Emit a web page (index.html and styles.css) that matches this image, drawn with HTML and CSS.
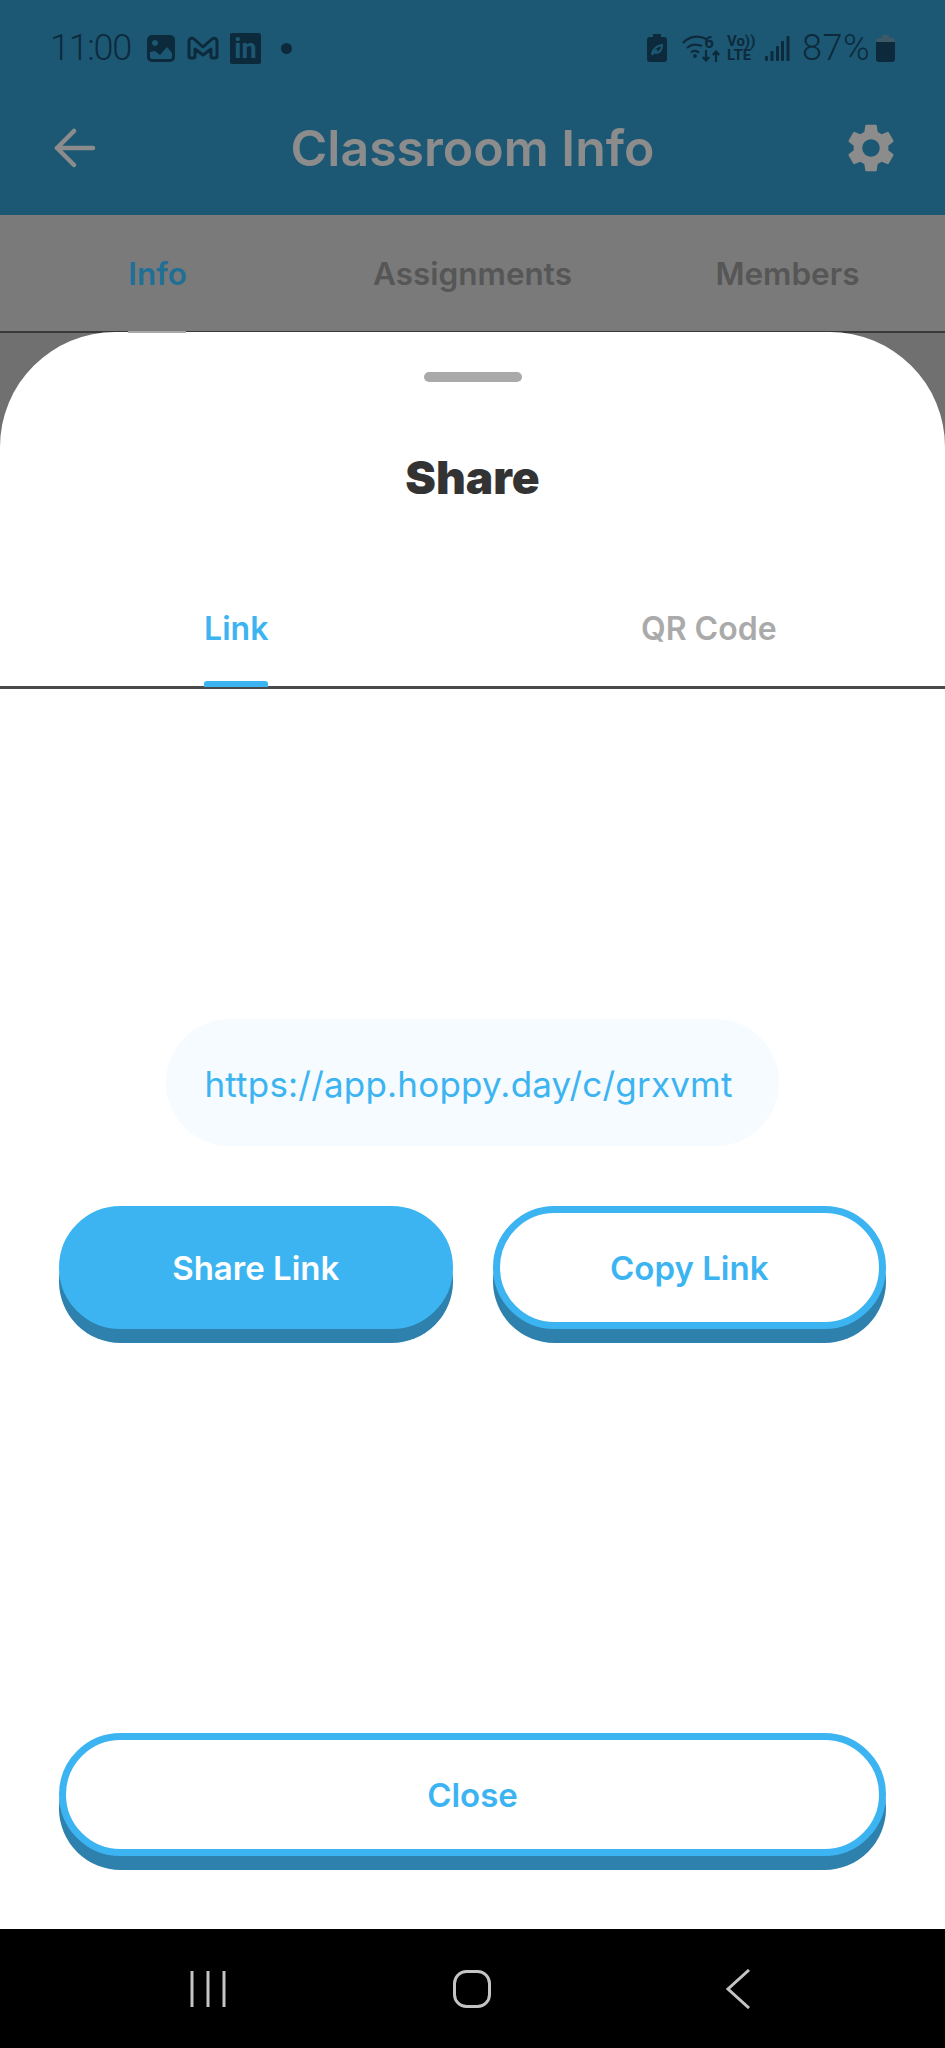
FILE: index.html
```html
<!DOCTYPE html>
<html lang="en">
<head>
  <meta charset="UTF-8">
  <title>Classroom Info</title>
  <meta name="viewport" content="width=device-width, initial-scale=1.0">
  <link rel="stylesheet" href="styles.css">
</head>
<body>
  <div class="tela">
    <div class="status">
      <div class="status-lado">
        <span class="hora">11:00</span>
        <svg class="ic-foto" width="28" height="27" viewBox="0 0 28 27">
          <path fill="#0d2a3d" fill-rule="evenodd" d="M5 0h18a5 5 0 0 1 5 5v17a5 5 0 0 1-5 5H5a5 5 0 0 1-5-5V5a5 5 0 0 1 5-5zM3 17v5a2 2 0 0 0 2 2h18a2 2 0 0 0 2-2v-4l-5-6-7 8-5-4zM8 5a3 3 0 1 0 .01 0z"/>
        </svg>
        <svg class="ic-gmail" width="32" height="24" viewBox="0 0 32 24">
          <path fill="none" stroke="#0d2a3d" stroke-width="3" stroke-linejoin="round" d="M2 5a3 3 0 0 1 5-2l9 8 9-8a3 3 0 0 1 5 2v15a2 2 0 0 1-2 2h-2a2 2 0 0 1-2-2v-7l-8 6-8-6v7a2 2 0 0 1-2 2H4a2 2 0 0 1-2-2z"/>
        </svg>
        <span class="ic-linkedin">in</span>
        <span class="ponto"></span>
      </div>
      <div class="status-lado">
        <svg class="ic-bateria-eco" width="20" height="28" viewBox="0 0 20 28">
          <path fill="#0d2a3d" d="M6 0h8v3h3a3 3 0 0 1 3 3v19a3 3 0 0 1-3 3H3a3 3 0 0 1-3-3V6a3 3 0 0 1 3-3h3z"/>
          <path fill="none" stroke="#1c5873" stroke-width="2" d="M5 20c1-6 5-8 10-9 0 5-2 8-7 8M5 21c1-2 3-4 5-5"/>
        </svg>
        <div class="wifi">
          <svg width="26" height="28" viewBox="0 0 26 28">
            <g fill="none" stroke="#0d2a3d" stroke-width="2.2">
              <path d="M1 9C7 2 17 1 24 5"/>
              <path d="M5 14c4-4 10-4 15-2"/>
              <path d="M9 18.500c2-2 5-2 8 0"/>
            </g>
            <circle cx="13" cy="22" r="1.900" fill="#0d2a3d"/>
          </svg>
          <span class="wifi-seis">6</span>
          <svg class="wifi-setas" width="18" height="12" viewBox="0 0 18 12">
            <path fill="none" stroke="#0d2a3d" stroke-width="2.200" d="M4 0v10M.8 7L4 10.500 7.200 7M14 12V2M10.800 5L14 1.500 17.200 5"/>
          </svg>
        </div>
        <div class="volte"><span>Vo))</span><span>LTE</span></div>
        <svg class="ic-sinal" width="25" height="25" viewBox="0 0 25 25">
          <g fill="#0d2a3d">
            <rect x="0" y="20" width="3" height="5" rx="1"/>
            <rect x="5.500" y="15" width="3" height="10" rx="1"/>
            <rect x="11" y="10" width="3" height="15" rx="1"/>
            <rect x="16" y="5" width="3" height="20" rx="1"/>
            <rect x="21.500" y="0" width="3" height="25" rx="1"/>
          </g>
        </svg>
        <span class="porcento">87%</span>
        <svg class="ic-bateria" width="19" height="27" viewBox="0 0 19 27">
          <path fill="#3d5968" d="M6 0h7v3h3a3 3 0 0 1 3 3v3H0V6a3 3 0 0 1 3-3h3z"/>
          <path fill="#0d2a3d" d="M0 7h19v17a3 3 0 0 1-3 3H3a3 3 0 0 1-3-3z"/>
        </svg>
      </div>
    </div>

    <div class="topo">
      <svg width="42" height="40" viewBox="0 0 42 40">
        <path fill="none" stroke="#8c8c8c" stroke-width="4.500" stroke-linecap="round" stroke-linejoin="round" d="M39 20H3M20 3L3 20l17 17"/>
      </svg>
      <h1>Classroom Info</h1>
      <svg class="engrenagem" width="58" height="58" viewBox="0 0 24 24">
        <path fill="#8c8c8c" d="M19.140 12.940c.04-.3.06-.61.06-.94 0-.32-.02-.64-.07-.94l2.030-1.580c.18-.14.23-.41.12-.61l-1.920-3.320c-.12-.22-.37-.29-.59-.22l-2.390.96c-.5-.38-1.030-.7-1.620-.94l-.36-2.540c-.04-.24-.24-.41-.48-.41h-3.840c-.24 0-.43.17-.47.41l-.36 2.540c-.59.24-1.130.57-1.620.94l-2.390-.96c-.22-.08-.47 0-.59.22L2.740 8.870c-.12.21-.08.47.12.61l2.030 1.580c-.05.3-.09.63-.09.94s.02.64.07.94l-2.030 1.580c-.18.14-.23.41-.12.61l1.920 3.320c.12.22.37.29.59.22l2.390-.96c.5.38 1.030.7 1.620.94l.36 2.540c.05.24.24.41.48.41h3.840c.24 0 .44-.17.47-.41l.36-2.540c.59-.24 1.130-.56 1.620-.94l2.390.96c.22.08.47 0 .59-.22l1.920-3.320c.12-.22.07-.47-.12-.61l-2.010-1.580zM12 15.600c-1.980 0-3.600-1.620-3.600-3.600s1.620-3.600 3.600-3.600 3.600 1.620 3.600 3.600-1.620 3.600-3.600 3.600z"/>
      </svg>
    </div>

    <div class="abas">
      <div class="aba ativa">Info</div>
      <div class="aba">Assignments</div>
      <div class="aba">Members</div>
    </div>

    <div class="fundo">
      <div class="folha">
        <div class="alca"></div>
        <h2>Share</h2>
        <div class="folha-abas">
          <div class="folha-aba ativa"><span>Link</span></div>
          <div class="folha-aba"><span>QR Code</span></div>
        </div>
        <div class="conteudo">
          <div class="url">https://app.hoppy.day/c/grxvmt</div>
          <div class="botoes">
            <div class="botao cheio">Share Link</div>
            <div class="botao">Copy Link</div>
          </div>
          <div class="botao fechar">Close</div>
        </div>
      </div>
    </div>

    <div class="nav">
      <svg width="38" height="38" viewBox="0 0 38 38">
        <path fill="none" stroke="#c4c4c4" stroke-width="3" d="M3 1v36M19 1v36M35 1v36"/>
      </svg>
      <svg class="nav-home" width="38" height="38" viewBox="0 0 38 38">
        <rect x="1.500" y="1.500" width="35" height="35" rx="12" fill="none" stroke="#c4c4c4" stroke-width="3"/>
      </svg>
      <svg width="26" height="40" viewBox="0 0 26 40">
        <path fill="none" stroke="#c4c4c4" stroke-width="3" d="M24 1L3 20l21 19"/>
      </svg>
    </div>
  </div>
</body>
</html>
```

FILE: styles.css
```css
* {
  box-sizing: border-box;
}
body {
  margin: 0;
  font-family: Inter, "Noto Sans", sans-serif;
}
.tela {
  width: 945px;
  height: 2048px;
  display: flex;
  flex-direction: column;
  overflow: hidden;
}
.status {
  height: 80px;
  padding: 16px 50px 0;
  background: #1c5873;
  color: #0d2a3d;
  display: flex;
  justify-content: space-between;
  align-items: center;
  font-family: Roboto, sans-serif;
}
.status-lado {
  display: flex;
  align-items: center;
}
.hora,
.porcento {
  font-size: 36px;
  font-weight: 300;
}
.hora {
  letter-spacing: -1.300px;
}
.ic-foto {
  margin-left: 16px;
}
.ic-gmail {
  margin-left: 12px;
}
.ic-linkedin {
  margin-left: 11px;
  width: 31px;
  height: 31px;
  border-radius: 2px;
  background: #0d2a3d;
  color: #1c5873;
  font-size: 27px;
  font-weight: 700;
  line-height: 33px;
  text-align: center;
}
.ponto {
  margin-left: 20px;
  width: 11px;
  height: 11px;
  border-radius: 50%;
  background: #0d2a3d;
}
.wifi {
  position: relative;
  margin-left: 15px;
  width: 38px;
  height: 28px;
}
.wifi-seis {
  position: absolute;
  right: 6px;
  top: -2px;
  font-size: 17px;
  font-weight: 700;
}
.wifi-setas {
  position: absolute;
  right: 0;
  bottom: 0;
}
.volte {
  margin-left: 7px;
  width: 27px;
  display: flex;
  flex-direction: column;
  font-size: 15px;
  font-weight: 700;
  line-height: 14px;
}
.ic-sinal {
  margin-left: 11px;
}
.porcento {
  margin-left: 12px;
  letter-spacing: .5px;
}
.ic-bateria {
  margin-left: 6px;
}
.topo {
  height: 135px;
  padding: 0 50px 0 54px;
  background: #1c5873;
  display: flex;
  justify-content: space-between;
  align-items: center;
}
.topo h1 {
  margin: 0 0 0 7px;
  color: #8c8c8c;
  font-size: 50px;
  font-weight: 600;
}
.engrenagem {
  margin-right: -5px;
}
.abas {
  height: 118px;
  background: #7a7a7a;
  border-bottom: 2px solid #3a3a3a;
  display: flex;
  align-items: center;
}
.aba {
  flex: 1;
  text-align: center;
  color: #565656;
  font-size: 31.500px;
  font-weight: 600;
}
.aba.ativa {
  position: relative;
  color: #1f6f96;
}
.aba.ativa::after {
  content: "";
  position: absolute;
  left: 128px;
  top: 77px;
  width: 58px;
  height: 2px;
  background: #a8a8a8;
}
.fundo {
  flex: 1;
  display: flex;
  background: #707070;
}
.folha {
  flex: 1;
  margin-top: -1px;
  background: #fff;
  border-radius: 115px 115px 0 0;
  padding-top: 40px;
  display: flex;
  flex-direction: column;
  align-items: center;
}
.alca {
  width: 98px;
  height: 10px;
  border-radius: 5px;
  background: #aaaaaa;
}
.folha h2 {
  margin: 65px 0 0;
  color: #333;
  font-size: 46px;
  font-weight: 900;
  line-height: 60px;
}
.folha-abas {
  margin-top: 101px;
  width: 100%;
  height: 81px;
  border-bottom: 3px solid #4a4a4a;
  display: flex;
}
.folha-aba {
  flex: 1;
  display: flex;
  justify-content: center;
  color: #aaa;
  font-size: 32px;
  font-weight: 600;
}
.folha-aba span {
  position: relative;
  height: 79px;
  line-height: 42px;
}
.folha-aba.ativa {
  color: #3db4f2;
}
.folha-aba.ativa span::after {
  content: "";
  position: absolute;
  left: 0;
  right: 0;
  bottom: 0;
  height: 6px;
  border-radius: 3px 3px 0 0;
  background: #3db4f2;
}
.conteudo {
  flex: 1;
  width: 100%;
  padding: 330px 59px 59px;
  display: flex;
  flex-direction: column;
  align-items: center;
}
.url {
  width: 613px;
  height: 127px;
  padding-right: 8px;
  border-radius: 64px;
  background: #f5fbff;
  color: #3db4f2;
  font-size: 35px;
  line-height: 130px;
  letter-spacing: .2px;
  text-align: center;
}
.botoes {
  margin-top: 60px;
  width: 100%;
  display: flex;
  gap: 40px;
}
.botao {
  flex: 1;
  height: 123px;
  border: 7px solid #3db4f2;
  border-radius: 62px;
  background: #fff;
  box-shadow: 0 14px 0 #2e80ad;
  color: #3db4f2;
  font-size: 33px;
  font-weight: 600;
  line-height: 110px;
  text-align: center;
}
.botao.cheio {
  background: #3db4f2;
  color: #fff;
}
.botao.fechar {
  flex: none;
  width: 100%;
  margin-top: auto;
  margin-bottom: 14px;
}
.nav {
  height: 119px;
  padding-left: 189px;
  background: #000;
  display: flex;
  gap: 226px;
  align-items: center;
}
.nav-home {
  margin-right: 8px;
}
```
